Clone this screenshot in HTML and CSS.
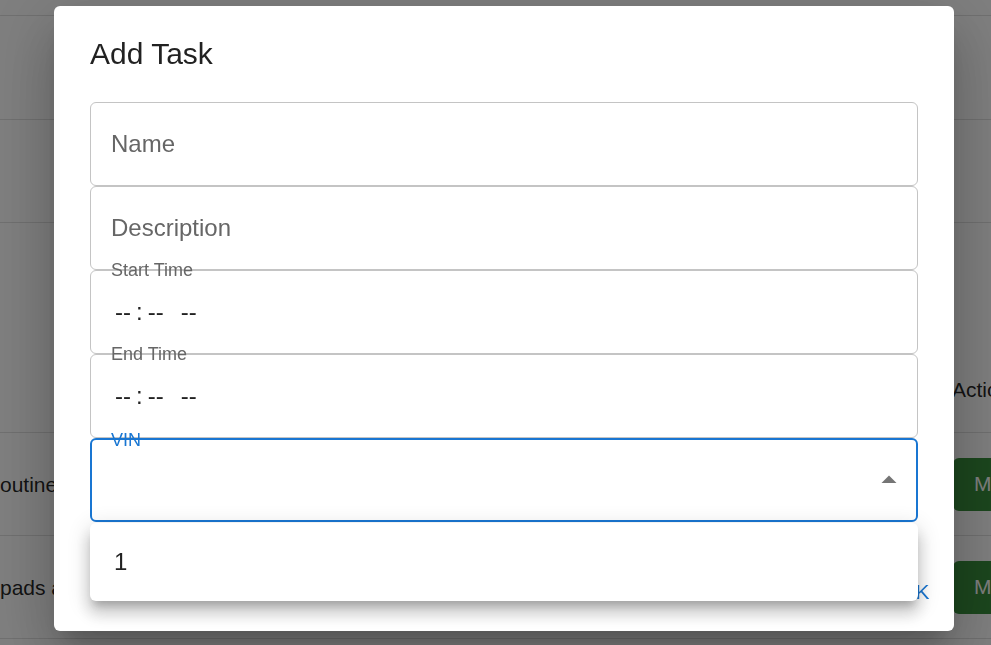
FILE: index.html
```html
<!DOCTYPE html>
<html lang="en">
<head>
<meta charset="utf-8">
<title>Add Task</title>
<link rel="stylesheet" href="styles.css">
</head>
<body>
<div class="page">
  <div class="row"><div class="cell"></div><div class="cell"></div></div>
  <div class="row"><div class="cell"></div><div class="cell"></div></div>
  <div class="row head"><div class="cell"></div><div class="cell">Actions</div></div>
  <div class="row"><div class="cell">outine check</div><div class="cell"><button class="green-btn">MARK DONE</button></div></div>
  <div class="row"><div class="cell">pads and rotors</div><div class="cell"><button class="green-btn">MARK DONE</button></div></div>
  <div class="row"><div class="cell"></div><div class="cell"></div></div>
</div>

<div class="backdrop">
  <div class="dialog" role="dialog">
    <h2 class="dialog-title">Add Task</h2>
    <div class="dialog-content">
      <div class="field">
        <span class="placeholder">Name</span>
      </div>
      <div class="field">
        <span class="placeholder">Description</span>
      </div>
      <div class="field">
        <span class="label">Start Time</span>
        <span class="time"><span class="seg">--</span><span class="sep">:</span><span class="seg">--</span><span class="seg ampm">--</span></span>
      </div>
      <div class="field">
        <span class="label">End Time</span>
        <span class="time"><span class="seg">--</span><span class="sep">:</span><span class="seg">--</span><span class="seg ampm">--</span></span>
      </div>
      <div class="field focused">
        <span class="label blue">VIN</span>
        <svg class="arrow" viewBox="0 0 24 24" width="36" height="36"><path d="M7 14l5-5 5 5z" fill="#757575"/></svg>
      </div>
    </div>
    <div class="dialog-actions">
      <button class="text-btn">Cancel</button>
      <button class="text-btn">OK</button>
    </div>
  </div>
</div>

<div class="menu">
  <div class="menu-item">1</div>
</div>
</body>
</html>
```

FILE: styles.css
```css
html, body {
  margin: 0;
  padding: 0;
  width: 991px;
  height: 645px;
  overflow: hidden;
  background: #ffffff;
  font-family: "Liberation Sans", Arial, sans-serif;
  color: rgba(0, 0, 0, 0.87);
}

/* Background page (table) */
.page {
  padding-top: 15px;
}
.row {
  display: grid;
  grid-template-columns: 1fr 38px;
  height: 104px;
  box-sizing: border-box;
  border-top: 1px solid #e0e0e0;
  font-size: 21px;
  line-height: 31px;
}
.row + .row { height: 103px; }
.row.head { height: 210px; }
.cell {
  display: flex;
  align-items: center;
  white-space: nowrap;
  overflow: visible;
}
.row.head .cell {
  align-items: flex-end;
  padding-bottom: 27px;
  margin-left: -1px;
}
.green-btn {
  flex: none;
  height: 53px;
  width: 180px;
  border: 0;
  border-radius: 6px;
  background: #388e3c;
  color: #ffffff;
  font-family: "Liberation Sans", Arial, sans-serif;
  font-size: 21px;
  text-align: left;
  padding: 0 0 0 21px;
  letter-spacing: 0.6px;
}

/* Modal */
.backdrop {
  position: fixed;
  inset: 0;
  background: rgba(0, 0, 0, 0.5);
  display: flex;
  align-items: flex-start;
  padding: 6px 0 0 54px;
}
.dialog {
  width: 900px;
  background: #ffffff;
  border-radius: 6px;
  box-shadow: 0 16px 22px -10px rgba(0,0,0,0.2), 0 36px 57px 4px rgba(0,0,0,0.14), 0 13px 69px 12px rgba(0,0,0,0.12);
  display: flex;
  flex-direction: column;
}
.dialog-title {
  margin: 0;
  padding: 24px 36px 0;
  font-size: 30px;
  line-height: 48px;
  font-weight: 500;
  color: rgba(0, 0, 0, 0.87);
}
.dialog-content {
  padding: 24px 36px 30px;
  display: flex;
  flex-direction: column;
}
.field {
  position: relative;
  height: 84px;
  box-sizing: border-box;
  border: 1px solid #c4c4c4;
  border-radius: 6px;
  padding: 0 20px;
  display: flex;
  align-items: center;
}
.field.focused {
  border: 2px solid #1976d2;
  padding: 0 19px;
}
.placeholder {
  font-size: 24px;
  line-height: 34px;
  color: #666666;
}
.label {
  position: absolute;
  left: 20px;
  top: -14px;
  font-size: 18px;
  line-height: 26px;
  color: #666666;
  white-space: nowrap;
}
.label.blue {
  left: 19px;
  top: -13px;
  color: #1976d2;
}
.time {
  display: flex;
  font-size: 24px;
  line-height: 34px;
  color: rgba(0, 0, 0, 0.87);
  padding-left: 4px;
}
.sep {
  margin: 0 5px;
}
.ampm {
  margin-left: 17px;
}
.arrow {
  position: absolute;
  right: 9px;
  top: 22px;
}
.dialog-actions {
  display: flex;
  justify-content: flex-end;
  gap: 12px;
  padding: 12px;
}
.text-btn {
  border: 0;
  background: transparent;
  color: #1976d2;
  font-family: "Liberation Sans", Arial, sans-serif;
  font-size: 21px;
  font-weight: 500;
  text-transform: uppercase;
  letter-spacing: 0.6px;
  line-height: 37px;
  padding: 9px 12px;
  border-radius: 6px;
}

/* Select dropdown menu (overlay) */
.menu {
  position: absolute;
  left: 90px;
  top: 523px;
  width: 828px;
  background: #ffffff;
  border-radius: 6px;
  padding: 12px 0;
  box-shadow: 0 8px 8px -4px rgba(0,0,0,0.2), 0 12px 15px 2px rgba(0,0,0,0.14), 0 5px 21px 3px rgba(0,0,0,0.12);
}
.menu-item {
  padding: 9px 24px;
  font-size: 24px;
  line-height: 36px;
  color: rgba(0, 0, 0, 0.87);
}
```
